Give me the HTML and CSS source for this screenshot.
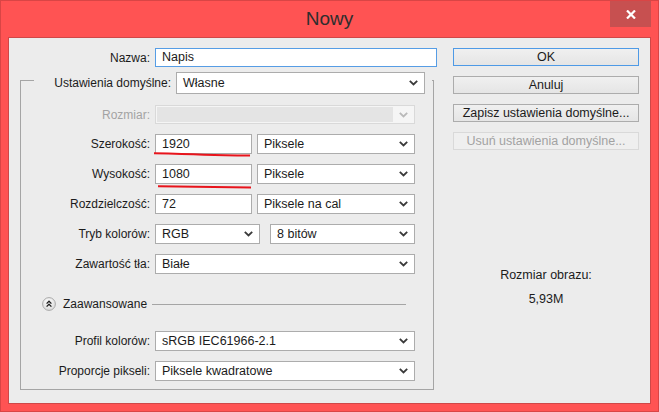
FILE: index.html
```html
<!DOCTYPE html>
<html lang="pl">
<head>
    <meta charset="UTF-8" />
    <title>Nowy</title>
    <link rel="stylesheet" href="styles.css">
</head>
<body>
    <div class="window">
        <div class="titlebar">
            <span></span>
            <div class="title">Nowy</div>
            <div class="close">
                <svg width="10" height="9" viewBox="0 0 10 9"><path d="M1 0.5 L9 8.5 M9 0.5 L1 8.5" stroke="#fff" stroke-width="2.2" fill="none"/></svg>
            </div>
        </div>
        <div class="content">
            <div class="main">
                <div class="name-row">
                    <label class="lbl">Nazwa:</label>
                    <div class="input focus">Napis</div>
                </div>
                <div class="group">
                    <div class="legend">
                        <label class="lbl">Ustawienia domyślne:</label>
                        <div class="select w-legend"><span>Własne</span><svg class="chev" width="9" height="6" viewBox="0 0 9 6"><polyline points="0.8,0.8 4.5,4.5 8.2,0.8" fill="none" stroke="#3a3a3a" stroke-width="1.8"/></svg></div>
                    </div>
                    <div class="rows">
                        <div class="row">
                            <label class="lbl off">Rozmiar:</label>
                            <div class="select dis w-full"><span class="dis-in"></span><svg class="chev" width="9" height="6" viewBox="0 0 9 6"><polyline points="0.8,0.8 4.5,4.5 8.2,0.8" fill="none" stroke="#b9b9b9" stroke-width="1.8"/></svg></div>
                        </div>
                        <div class="row">
                            <label class="lbl">Szerokość:</label>
                            <div class="input w-num marked">1920<svg class="mark" width="100" height="24" viewBox="0 0 100 24"><path d="M0 19.3 Q 30 20 50 20.8 T 96 21.6" fill="none" stroke="#e8141c" stroke-width="2"/></svg></div>
                            <div class="select w-unit"><span>Piksele</span><svg class="chev" width="9" height="6" viewBox="0 0 9 6"><polyline points="0.8,0.8 4.5,4.5 8.2,0.8" fill="none" stroke="#3a3a3a" stroke-width="1.8"/></svg></div>
                        </div>
                        <div class="row">
                            <label class="lbl">Wysokość:</label>
                            <div class="input w-num marked">1080<svg class="mark" width="100" height="26" viewBox="0 0 100 26"><path d="M4 22.3 Q 50 23 97 23.6" fill="none" stroke="#e8141c" stroke-width="2"/></svg></div>
                            <div class="select w-unit"><span>Piksele</span><svg class="chev" width="9" height="6" viewBox="0 0 9 6"><polyline points="0.8,0.8 4.5,4.5 8.2,0.8" fill="none" stroke="#3a3a3a" stroke-width="1.8"/></svg></div>
                        </div>
                        <div class="row">
                            <label class="lbl">Rozdzielczość:</label>
                            <div class="input w-num">72</div>
                            <div class="select w-unit"><span>Piksele na cal</span><svg class="chev" width="9" height="6" viewBox="0 0 9 6"><polyline points="0.8,0.8 4.5,4.5 8.2,0.8" fill="none" stroke="#3a3a3a" stroke-width="1.8"/></svg></div>
                        </div>
                        <div class="row">
                            <label class="lbl">Tryb kolorów:</label>
                            <div class="select w-mode"><span>RGB</span><svg class="chev" width="9" height="6" viewBox="0 0 9 6"><polyline points="0.8,0.8 4.5,4.5 8.2,0.8" fill="none" stroke="#3a3a3a" stroke-width="1.8"/></svg></div>
                            <div class="select w-bits"><span>8 bitów</span><svg class="chev" width="9" height="6" viewBox="0 0 9 6"><polyline points="0.8,0.8 4.5,4.5 8.2,0.8" fill="none" stroke="#3a3a3a" stroke-width="1.8"/></svg></div>
                        </div>
                        <div class="row">
                            <label class="lbl">Zawartość tła:</label>
                            <div class="select w-full"><span>Białe</span><svg class="chev" width="9" height="6" viewBox="0 0 9 6"><polyline points="0.8,0.8 4.5,4.5 8.2,0.8" fill="none" stroke="#3a3a3a" stroke-width="1.8"/></svg></div>
                        </div>
                    </div>
                    <div class="adv">
                        <svg class="adv-icon" width="14" height="14" viewBox="0 0 14 14">
                            <defs>
                                <radialGradient id="g" cx="0.45" cy="0.35" r="0.7">
                                    <stop offset="0" stop-color="#ffffff"/>
                                    <stop offset="1" stop-color="#d6d6d6"/>
                                </radialGradient>
                            </defs>
                            <circle cx="7" cy="7" r="6.4" fill="url(#g)" stroke="#a3a3a3" stroke-width="0.9"/>
                            <polyline points="4.6,6.6 7,4.2 9.4,6.6" fill="none" stroke="#1e1e1e" stroke-width="1.3"/>
                            <polyline points="4.6,9.6 7,7.2 9.4,9.6" fill="none" stroke="#1e1e1e" stroke-width="1.3"/>
                        </svg>
                        <span class="adv-text">Zaawansowane</span>
                        <span class="adv-line"></span>
                    </div>
                    <div class="rows">
                        <div class="row">
                            <label class="lbl">Profil kolorów:</label>
                            <div class="select w-full"><span>sRGB IEC61966-2.1</span><svg class="chev" width="9" height="6" viewBox="0 0 9 6"><polyline points="0.8,0.8 4.5,4.5 8.2,0.8" fill="none" stroke="#3a3a3a" stroke-width="1.8"/></svg></div>
                        </div>
                        <div class="row">
                            <label class="lbl">Proporcje pikseli:</label>
                            <div class="select w-full"><span>Piksele kwadratowe</span><svg class="chev" width="9" height="6" viewBox="0 0 9 6"><polyline points="0.8,0.8 4.5,4.5 8.2,0.8" fill="none" stroke="#3a3a3a" stroke-width="1.8"/></svg></div>
                        </div>
                    </div>
                </div>
            </div>
            <div class="side">
                <div class="btn default">OK</div>
                <div class="btn">Anuluj</div>
                <div class="btn">Zapisz ustawienia domyślne...</div>
                <div class="btn disabled">Usuń ustawienia domyślne...</div>
                <div class="info">
                    <div>Rozmiar obrazu:</div>
                    <div class="info-val">5,93M</div>
                </div>
            </div>
        </div>
    </div>
</body>
</html>
```

FILE: styles.css
```css
*{
    margin:0;
    padding:0;
    box-sizing:border-box;
}
body{
    font-family:"Liberation Sans", Arial, sans-serif;
    font-size:12px;
    color:#1b1b1b;
    background:#ff5353;
}
.window{
    width:659px;
    height:412px;
    background:#ff5353;
    border:1px solid #d94545;
    padding:0 7px 7px 7px;
    display:flex;
    flex-direction:column;
}
.titlebar{
    height:36px;
    display:grid;
    grid-template-columns:41px 1fr 41px;
    align-items:start;
}
.title{
    text-align:center;
    font-size:19px;
    line-height:36px;
    color:#2e2e2e;
}
.close{
    width:41px;
    height:26px;
    background:#c75050;
    display:flex;
    align-items:center;
    justify-content:center;
}
.content{
    flex:1;
    background:#ececec;
    border:1px solid #cf4848;
    display:flex;
    gap:16px;
}
.main{
    width:428px;
    padding-top:10px;
}
.lbl{
    text-align:right;
    white-space:nowrap;
}
.lbl.off{
    color:#a3a3a3;
}
.name-row{
    display:flex;
    align-items:center;
    height:19px;
}
.name-row .lbl{
    width:141px;
    margin-right:5px;
}
.input{
    position:relative;
    height:20px;
    background:#fff;
    border:1px solid #acacac;
    padding-left:6px;
    line-height:18px;
    font-size:12.5px;
}
.input.focus{
    width:282px;
    height:19px;
    line-height:17px;
    border-color:#569de5;
}
.mark{
    position:absolute;
    left:-2px;
    top:-1px;
    overflow:visible;
}
.select{
    height:20px;
    background:#fff;
    border:1px solid #acacac;
    padding:0 6px;
    display:flex;
    align-items:center;
    justify-content:space-between;
    font-size:12.5px;
}
.select.dis{
    height:19px;
    border-color:#d9d9d9;
    background:#f5f5f5;
    padding:1px 6px 1px 1px;
    align-items:stretch;
}
.dis-in{
    width:236px;
    background:#e4e4e4;
}
.select.dis .chev{
    align-self:center;
}
.w-legend{
    width:249px;
    height:22px;
}
.w-full{
    width:260px;
}
.w-num{
    width:97px;
}
.w-unit{
    width:158px;
    margin-left:5px;
}
.w-mode{
    width:105px;
}
.w-bits{
    width:145px;
    margin-left:10px;
}
.group{
    margin:13px 0 0 11px;
    width:414px;
    border:1px solid #a5a5a5;
    padding-bottom:8px;
}
.legend{
    margin:-9px 0 0 13px;
    width:398px;
    height:22px;
    background:#ececec;
    display:flex;
    align-items:center;
    justify-content:flex-end;
    padding-right:7px;
}
.legend .lbl{
    margin-right:5px;
}
.rows{
    display:flex;
    flex-direction:column;
    gap:10px;
}
.legend + .rows{
    margin-top:11px;
}
.row{
    display:flex;
    align-items:center;
}
.row .lbl{
    width:129px;
    margin-right:5px;
}
.adv{
    display:flex;
    align-items:center;
    height:14px;
    margin:23px 0 20px 21px;
}
.adv-text{
    margin-left:7px;
}
.adv-line{
    width:254px;
    height:1px;
    background:#a5a5a5;
    margin-left:5px;
}
.side{
    width:186px;
    padding-top:10px;
    display:flex;
    flex-direction:column;
    gap:10px;
}
.btn{
    height:18px;
    border:1px solid #acacac;
    background:linear-gradient(#f0f0f0, #e5e5e5);
    text-align:center;
    line-height:16px;
    font-size:12.5px;
}
.btn.default{
    border-color:#4e9ae6;
}
.btn.disabled{
    border-color:#d9d9d9;
    background:#efefef;
    color:#a2a2a2;
}
.info{
    margin-top:107px;
    text-align:center;
    line-height:16px;
    font-size:12.5px;
}
.info-val{
    margin-top:8px;
}
```
